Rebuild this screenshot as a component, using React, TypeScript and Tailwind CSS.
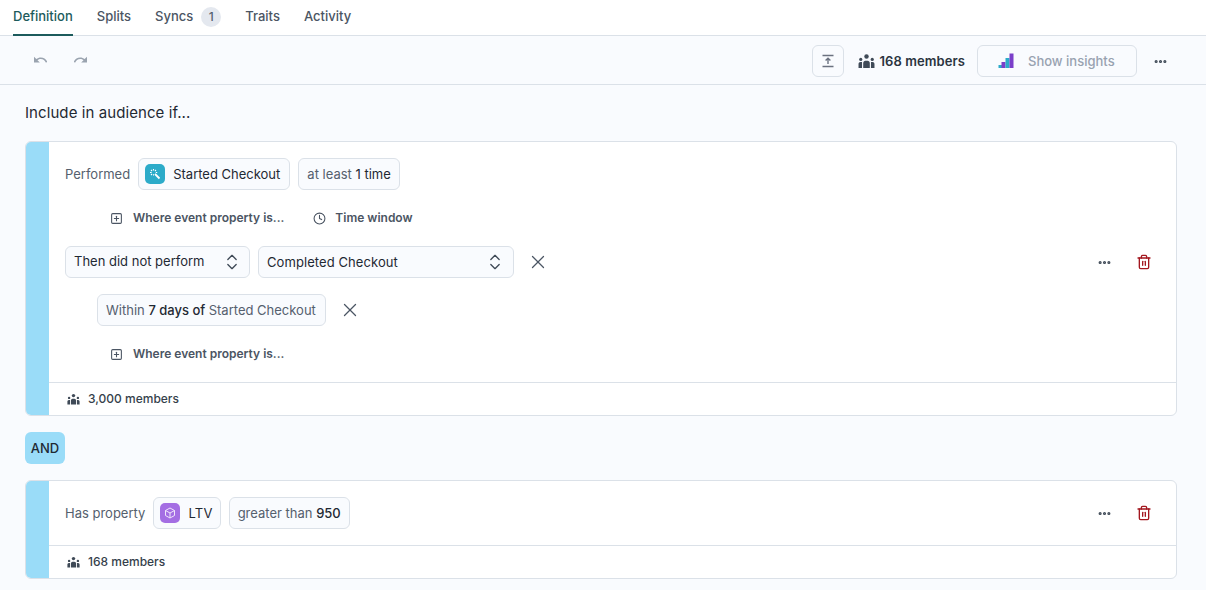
import React from "react";
import { X, ChevronsUpDown, Trash2, Ellipsis, SquarePlus, Clock } from "lucide-react";

const Users = ({ className = "" }: { className?: string }) => (
  <svg viewBox="0 0 16 16" className={className} fill="currentColor">
    <circle cx="8" cy="3.2" r="2.1" />
    <circle cx="2.6" cy="6" r="1.5" />
    <circle cx="13.4" cy="6" r="1.5" />
    <path d="M4.9 14V9.4c0-1.3.9-2.2 2-2.2h2.2c1.1 0 2 .9 2 2.2V14z" />
    <path d="M.5 14v-3.6c0-1 .7-1.9 1.8-1.9h1.5V14zM15.5 14v-3.6c0-1-.7-1.9-1.8-1.9h-1.5V14z" />
  </svg>
);

const UndoIcon = ({ className = "" }: { className?: string }) => (
  <svg viewBox="2 6 20 12" className={className} fill="currentColor">
    <path d="M12.5 8c-2.65 0-5.05.99-6.9 2.6L2 7v9h9l-3.62-3.62c1.39-1.16 3.16-1.88 5.12-1.88 3.54 0 6.55 2.31 7.6 5.5l2.37-.78C21.08 11.03 17.15 8 12.5 8z" />
  </svg>
);

const Pill = ({ children, className = "" }: { children: React.ReactNode; className?: string }) => (
  <div className={`flex h-8 items-center rounded-md border border-[#dbe1e8] bg-[#f9fbfe] text-[13px] text-[#1f2933] ${className}`}>
    {children}
  </div>
);

const Muted = ({ children }: { children: React.ReactNode }) => <span className="text-[#55606e]">{children}</span>;

const Ghost = ({ icon, label, className = "" }: { icon: React.ReactNode; label: string; className?: string }) => (
  <div className={`flex items-center text-xs font-semibold text-[#4b5563] ${className}`}>
    {icon}
    <span>{label}</span>
  </div>
);

const Footer = ({ label }: { label: string }) => (
  <div className="flex h-[33px] items-center gap-2 border-t border-[#dbe1e8] pl-[18px] text-xs font-medium text-[#353f4b]">
    <Users className="h-[13px] w-[13px] text-[#3f4a57]" />
    <span>{label}</span>
  </div>
);

const RowActions = () => (
  <div className="ml-auto flex items-center gap-[24px] pr-[24px]">
    <Ellipsis className="h-[15px] w-[15px] text-[#3f4a57]" strokeWidth={3} />
    <Trash2 className="h-[16px] w-[16px] text-[#a3171f]" strokeWidth={2} />
  </div>
);

const Chevrons = () => <ChevronsUpDown className="h-5 w-5 text-[#3f4a57]" strokeWidth={1.6} />;

export default function App() {
  return (
    <div className="h-[590px] w-[1206px] overflow-hidden bg-[#f9fbfe] font-['Inter',sans-serif]">
      <div className="flex h-9 items-end gap-6 border-b border-[#dbe1e8] bg-white px-[13px] text-[13px] font-medium text-[#4b5563]">
        <div className="-mb-px flex h-9 items-center border-b-2 border-[#1c5b5c] pb-px text-[#1c5b5c]">Definition</div>
        <div className="flex h-[35px] items-center pb-px">Splits</div>
        <div className="flex h-[35px] items-center gap-2 pb-px">
          Syncs
          <span className="flex h-5 w-5 items-center justify-center rounded-full bg-[#e4e8ef] text-xs text-[#55606e]">1</span>
        </div>
        <div className="flex h-[35px] items-center pb-px">Traits</div>
        <div className="flex h-[35px] items-center pb-px">Activity</div>
      </div>

      <div className="flex h-[49px] items-center border-b border-[#dbe1e8] pl-[34px] pr-[38px] pt-[2px]">
        <UndoIcon className="-mt-[3px] h-[8px] w-[13px] text-[#9aa3af]" />
        <UndoIcon className="-mt-[3px] ml-[27px] h-[8px] w-[13px] -scale-x-100 text-[#9aa3af]" />
        <div className="ml-auto flex h-8 w-8 items-center justify-center rounded-md border border-[#dbe1e8]">
          <svg viewBox="0 0 16 16" className="h-4 w-4 text-[#6b7280]" fill="none" stroke="currentColor" strokeWidth="1.4">
            <path d="M2.5 2.5h11M2.5 13.5h11M8 11V5.5M5.6 7.6 8 5.2l2.4 2.4" />
          </svg>
        </div>
        <Users className="ml-[14px] h-[17px] w-[17px] text-[#3f4a57]" />
        <span className="ml-[5px] pt-px text-[13px] font-semibold tracking-[0.08px] text-[#2b3440]">168 members</span>
        <div className="ml-[12px] flex h-8 w-[160px] items-center rounded-md border border-[#dbe1e8] pl-[20px] text-[13px] font-medium text-[#98a2b0]">
          <svg viewBox="0 0 16 16" className="h-4 w-4">
            <rect x="0.5" y="12" width="3.5" height="3" fill="#2cabc9" />
            <rect x="3.5" y="9" width="4" height="6" fill="#7b3fc9" />
            <rect x="7.5" y="5" width="4" height="10" fill="#2cabc9" />
            <rect x="11.5" y="0.5" width="4" height="14.5" fill="#7b3fc9" />
          </svg>
          <span className="ml-[14px] pt-px">Show insights</span>
        </div>
        <Ellipsis className="ml-4 h-[15px] w-[15px] text-[#3f4a57]" strokeWidth={3} />
      </div>

      <div className="pl-[25px] pr-[29px] pt-[18px]">
        <div className="h-[20px] text-[15px] leading-5 tracking-[0.08px] text-[#1f2933]">Include in audience if...</div>

        <div className="mt-[18px] flex h-[275px] overflow-hidden rounded-md border border-[#dbe1e8] bg-white">
          <div className="w-[23px] shrink-0 bg-[#9adcf8]" />
          <div className="flex flex-1 flex-col">
            <div className="flex flex-1 flex-col pl-[16px] pt-4">
              <div className="flex items-center gap-2">
                <span className="pt-px text-[13px] text-[#55606e]">Performed</span>
                <Pill className="pl-[6px] pr-[9px]">
                  <span className="flex h-5 w-5 items-center justify-center rounded-[5px] bg-[#2cabc9]">
                    <svg viewBox="0 0 12 12" className="h-3 w-3" fill="none" stroke="white" strokeWidth="1.1">
                      <path d="M6 6 10.5 10.5" strokeWidth="1.8" />
                      <path d="M4.5 1v1.6M4.5 6.2v1.4M1 4.5h1.6M6.8 4.5h1.4M2 2l1 1M7 2 6 3M2 7l1-1" />
                    </svg>
                  </span>
                  <span className="ml-2 pt-px">Started Checkout</span>
                </Pill>
                <Pill className="px-2 pt-px">
                  <Muted>at least&nbsp;</Muted>1 time
                </Pill>
              </div>
              <div className="mt-[20px] flex h-[16px] items-center pl-[45px]">
                <Ghost className="gap-[10px]" icon={<SquarePlus className="h-[13px] w-[13px]" />} label="Where event property is..." />
                <Ghost className="ml-[29px] gap-[9px]" icon={<Clock className="h-[13px] w-[13px]" />} label="Time window" />
              </div>
              <div className="mt-[20px] flex items-center">
                <Pill className="w-[185px] justify-between pl-2 pr-[7px]">
                  <span>Then did not perform</span>
                  <Chevrons />
                </Pill>
                <Pill className="ml-2 w-[256px] justify-between pl-2 pr-[8px]">
                  <span className="pt-px tracking-[0.08px]">Completed Checkout</span>
                  <Chevrons />
                </Pill>
                <X className="ml-[13px] h-[22px] w-[22px] text-[#4b5563]" strokeWidth={1.4} />
                <RowActions />
              </div>
              <div className="ml-[32px] mt-4 flex items-center">
                <Pill className="w-[229px] px-2 pt-px">
                  <Muted>Within&nbsp;</Muted>
                  <span className="font-medium">7 days of&nbsp;</span>
                  <Muted>Started Checkout</Muted>
                </Pill>
                <X className="ml-[13px] h-[22px] w-[22px] text-[#4b5563]" strokeWidth={1.4} />
              </div>
              <div className="mt-[20px] flex h-[16px] items-center pl-[45px]">
                <Ghost className="gap-[10px]" icon={<SquarePlus className="h-[13px] w-[13px]" />} label="Where event property is..." />
              </div>
            </div>
            <Footer label="3,000 members" />
          </div>
        </div>

        <div className="mt-4 flex h-8 w-10 items-center justify-center rounded-md bg-[#9adcf8] pt-px text-[13px] font-medium text-[#1f2933]">AND</div>

        <div className="mt-4 flex h-[99px] overflow-hidden rounded-md border border-[#dbe1e8] bg-white">
          <div className="w-[23px] shrink-0 bg-[#9adcf8]" />
          <div className="flex flex-1 flex-col">
            <div className="flex flex-1 items-center gap-2 pl-[16px]">
              <span className="pt-px text-[13px] text-[#55606e]">Has property</span>
              <Pill className="pl-[6px] pr-[7px]">
                <span className="flex h-5 w-5 items-center justify-center rounded-[5px] bg-[#a46ee3]">
                  <svg viewBox="0 0 12 12" className="h-3 w-3" fill="none" stroke="#f0e6fb" strokeWidth="1">
                    <path d="M6 1 10.5 3.5v5L6 11 1.5 8.5v-5zM1.5 3.5 6 6l4.5-2.5M6 6v5" />
                  </svg>
                </span>
                <span className="ml-2 pt-px tracking-[0.02em]">LTV</span>
              </Pill>
              <Pill className="px-2 pt-px">
                <Muted>greater than&nbsp;</Muted>
                <span className="font-medium">950</span>
              </Pill>
              <RowActions />
            </div>
            <Footer label="168 members" />
          </div>
        </div>
      </div>
    </div>
  );
}
